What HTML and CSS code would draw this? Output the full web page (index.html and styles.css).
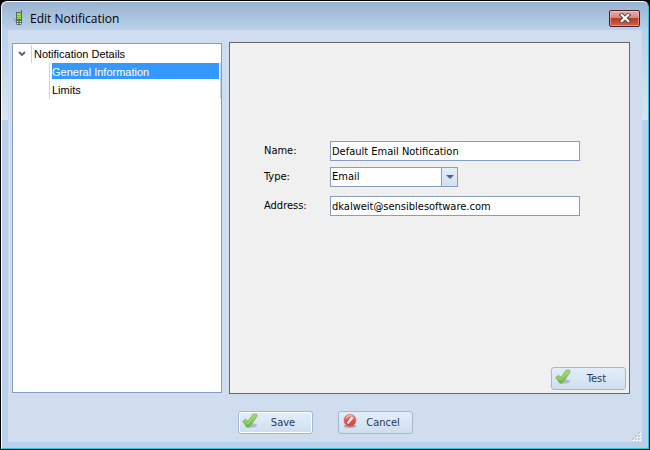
FILE: index.html
```html
<!DOCTYPE html>
<html lang="en">
<head>
<meta charset="utf-8">
<title>Edit Notification</title>
<link rel="stylesheet" href="styles.css">
</head>
<body>
<svg class="defs" aria-hidden="true">
  <defs>
    <linearGradient id="green" x1="0" y1="0" x2="0" y2="1">
      <stop offset="0" stop-color="#a4dc78"/><stop offset="1" stop-color="#6ab640"/>
    </linearGradient>
    <linearGradient id="red" x1="0" y1="0" x2="0" y2="1">
      <stop offset="0" stop-color="#f39a94"/><stop offset="0.5" stop-color="#e4534c"/><stop offset="1" stop-color="#d8423c"/>
    </linearGradient>
    <symbol id="check" viewBox="0 0 16 16">
      <ellipse cx="9" cy="12.4" rx="6" ry="2.2" fill="#8593a8" opacity="0.5"/>
      <path d="M0.8 8.4 L3.6 6.2 L6 8.4 L11 1.2 L14.8 1.2 L14.8 3.6 L7.6 14 L4.8 14.2 Z" fill="url(#green)" stroke="#74b552" stroke-width="0.8" stroke-linejoin="round"/>
      <path d="M2.6 8.2 L5.8 11 L12.4 2.4" fill="none" stroke="#a9dd84" stroke-width="1"/>
    </symbol>
    <symbol id="stop" viewBox="0 0 16 16">
      <ellipse cx="8" cy="13" rx="6" ry="1.8" fill="#8b6b78" opacity="0.6"/>
      <circle cx="8" cy="7.2" r="6" fill="url(#red)" stroke="#d9625d" stroke-width="0.6"/>
      <path d="M5.6 10.4 L10.6 4.2" stroke="#fff" stroke-width="2.2"/>
      <path d="M3.6 5.4 Q6 2.2 9.4 2.6" fill="none" stroke="#f9c8c4" stroke-width="1"/>
    </symbol>
  </defs>
</svg>
<div class="window">
  <header class="titlebar">
    <svg class="app-icon" viewBox="0 0 16 16" aria-hidden="true">
      <path d="M0 7 L5 10 V14 Z" fill="#7d92ad" opacity="0.5"/>
      <path d="M9.5 3V0" stroke="#59645c" stroke-width="1"/>
      <path d="M4 2h6v11l-1 2H5l-1-2z" fill="#5c665f"/>
      <rect x="5" y="3" width="4" height="6" fill="#93e637"/>
      <path d="M5 5.5h4M5 7.5h4" stroke="#60b51b" stroke-width="0.6"/>
      <path d="M5 11.5h4M5 13.5h4" stroke="#f0f2f4"/>
      <path d="M7 11v3" stroke="#333"/>
    </svg>
    <h1 class="title">Edit Notification</h1>
    <button class="close" type="button" aria-label="Close">
      <svg viewBox="0 0 12 10" aria-hidden="true">
        <path d="M2.8 2 L9.2 8 M9.2 2 L2.8 8" stroke="#593c47" stroke-width="4.2" stroke-linecap="square"/>
        <path d="M2.8 2 L9.2 8 M9.2 2 L2.8 8" stroke="#f5f6f8" stroke-width="2.3" stroke-linecap="square"/>
      </svg>
    </button>
  </header>
  <form class="client">
    <div class="panes">
      <nav class="tree" aria-label="Sections">
        <div class="branch">
          <svg class="chevron" viewBox="0 0 8 6" aria-hidden="true"><path d="M1 1 L4 4 L7 1" fill="none" stroke="#54607d" stroke-width="1.8"/></svg>
          <span class="branch-label">Notification Details</span>
        </div>
        <ul class="leaves">
          <li><a class="leaf selected" href="#general">General Information</a></li>
          <li><a class="leaf" href="#limits">Limits</a></li>
        </ul>
      </nav>
      <section class="details" id="general">
        <div class="fields">
          <div class="row">
            <label for="name">Name:</label>
            <input id="name" class="field" type="text" value="Default Email Notification">
          </div>
          <div class="row">
            <label for="type">Type:</label>
            <span class="dropdown">
              <select id="type" class="field"><option>Email</option></select>
              <span class="arrow"></span>
            </span>
          </div>
          <div class="row detached">
            <label for="address">Address:</label>
            <input id="address" class="field" type="text" value="dkalweit@sensiblesoftware.com">
          </div>
        </div>
        <button class="button test" type="button"><svg aria-hidden="true"><use href="#check"/></svg><span>Test</span></button>
      </section>
    </div>
    <footer class="actions">
      <button class="button primary" type="submit"><svg aria-hidden="true"><use href="#check"/></svg><span>Save</span></button>
      <button class="button" type="button"><svg aria-hidden="true"><use href="#stop"/></svg><span>Cancel</span></button>
    </footer>
    <svg class="grip" viewBox="0 0 9 9" aria-hidden="true">
      <path d="M7 1h2v2h-2zM4 4h2v2h-2zM7 4h2v2h-2zM1 7h2v2h-2zM4 7h2v2h-2zM7 7h2v2h-2z" fill="#fff"/>
      <path d="M6 0h2v2h-2zM3 3h2v2h-2zM6 3h2v2h-2zM0 6h2v2h-2zM3 6h2v2h-2zM6 6h2v2h-2z" fill="#c3c9d3"/>
    </svg>
  </form>
</div>
</body>
</html>
```

FILE: styles.css
```css
* {
  box-sizing: border-box;
}

body {
  margin: 0;
  height: 100vh;
  padding: 1px;
  background: #000;
  color: #000;
  font: 11px/14px "DejaVu Sans Condensed", "DejaVu Sans", sans-serif;
}

.defs {
  position: absolute;
  width: 0;
  height: 0;
}

.window {
  height: 100%;
  display: flex;
  flex-direction: column;
  padding: 0 6px 6px;
  border: 1px solid #fff;
  border-right-color: #2cc8e8;
  border-bottom-color: #2cc8e8;
  border-radius: 6px 6px 0 0;
  background: linear-gradient(#99b4d1, #b9d1ea 28px, #d9e6f3 118px, #b9d1ea 118px);
}

.titlebar {
  flex: 0 0 28px;
  display: flex;
  align-items: center;
  padding: 0 2px 0 4px;
}

.app-icon {
  width: 16px;
  height: 16px;
}

.title {
  flex: 1;
  margin: 0 0 0 2px;
  padding-top: 6px;
  font: 12px/16px "Open Sans", sans-serif;
}

.app-icon,
.close {
  margin-top: 4px;
}

.close {
  display: grid;
  place-items: center;
  width: 31px;
  height: 17px;
  padding: 0;
  border: 1px solid #4b1f2e;
  border-radius: 2px;
  background: linear-gradient(#e8b0a6, #d98478 46%, #bb3b24 50%, #cf6248);
  box-shadow: inset 0 0 0 1px rgba(255, 215, 210, 0.45);
}

.close svg {
  width: 12px;
  height: 10px;
}

.client {
  position: relative;
  flex: 1;
  display: flex;
  flex-direction: column;
  padding: 12px 12px 8px 4px;
  background: #d0ddee;
}

.panes {
  flex: 1;
  display: flex;
  gap: 7px;
}

.tree {
  flex: 0 0 210px;
  margin: 1px 0;
  padding: 1px 0 1px 1px;
  border: 1px solid #859ebf;
  background: #fff;
  font: 11px/18px "Liberation Sans", sans-serif;
}

.branch {
  display: flex;
  align-items: center;
  gap: 5px;
  height: 18px;
  padding-left: 4px;
}

.chevron {
  width: 8px;
  height: 6px;
}

.branch-label {
  padding-left: 2px;
  border-left: 1px solid #c5d5ea;
}

.leaves {
  margin: 0 0 0 35px;
  padding: 0 0 0 2px;
  border: solid #c5d5ea;
  border-width: 0 1px;
  list-style: none;
}

.leaves li {
  height: 18px;
  padding: 0 1px 2px 0;
}

.leaf {
  display: block;
  padding-top: 2px;
  line-height: 14px;
  color: #000;
  text-decoration: none;
}

.leaf.selected {
  background: #3399ff;
  color: #fff;
}

.details {
  flex: 1;
  display: flex;
  flex-direction: column;
  padding: 98px 3px 3px 34px;
  border: 1px solid #696969;
  background: #f0f0f0;
}

.fields {
  display: flex;
  flex-direction: column;
  gap: 6px;
}

.row {
  display: grid;
  grid-template-columns: 66px 250px;
  align-items: center;
}

.row.detached {
  margin-top: 3px;
}

.field {
  display: block;
  width: 100%;
  height: 20px;
  margin: 0;
  padding: 0 1px;
  border: 1px solid #859ebf;
  border-radius: 0;
  background: #fff;
  color: #000;
  font: inherit;
  appearance: none;
}

.dropdown {
  display: grid;
  width: 128px;
}

.dropdown > * {
  grid-area: 1 / 1;
}

.arrow {
  display: grid;
  place-items: center;
  justify-self: end;
  width: 17px;
  border: 1px solid #859ebf;
  background: linear-gradient(#e5eefa, #d2e0f0);
  pointer-events: none;
}

.arrow::before {
  content: "";
  border: 4px solid transparent;
  border-top-color: #54607d;
  border-bottom: 0;
}

.button {
  display: flex;
  align-items: center;
  width: 75px;
  height: 23px;
  padding: 0 3px;
  border: 1px solid #a5b6d0;
  border-radius: 3px;
  background: linear-gradient(#e3eefb, #cfdeee);
  color: #1e395b;
  font: inherit;
}

.button svg {
  width: 16px;
  height: 16px;
  margin-bottom: 3px;
}

.button span {
  flex: 1;
  text-align: center;
}

.button.primary {
  box-shadow: inset 0 0 0 1px #fff;
}

.test {
  margin: auto 0 0 auto;
}

.actions {
  display: flex;
  justify-content: center;
  gap: 25px;
  padding: 17px 0 0 8px;
}

.grip {
  position: absolute;
  right: 1px;
  bottom: 1px;
  width: 9px;
  height: 9px;
}
```
